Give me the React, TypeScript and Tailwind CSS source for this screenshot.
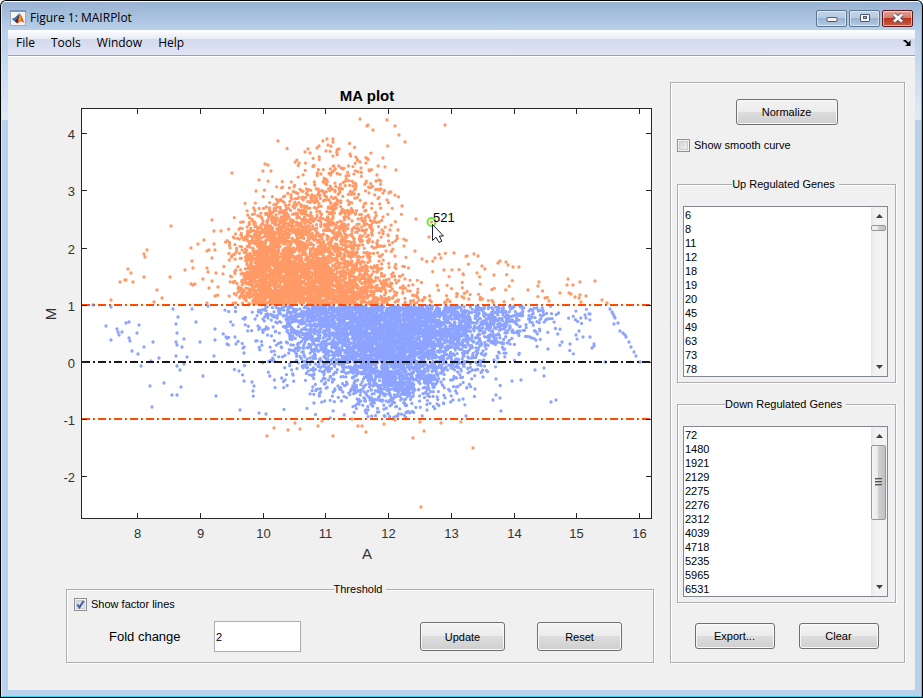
import { useState, type ReactNode } from "react";
import clsx from "clsx";

const upGenes = ["6", "8", "11", "12", "18", "19", "20", "45", "49", "63", "73", "78"];
const downGenes = ["72", "1480", "1921", "2129", "2275", "2276", "2312", "4039", "4718", "5235", "5965", "6531"];

type Point = [number, number];

// Point density on a 20px grid, first column at x = 180. Digits index into COUNTS.
const COUNTS = [0, 0.4, 1.8, 5, 12, 26, 48, 85, 135, 200];
const STEP = 20;
const GRID_X = 180;

const upperGrid = {
  top: 140,
  rows: [
    "000000001000000000000000",
    "000000344420000000000000",
    "000002455530000000000000",
    "000025665541000000000000",
    "000267766642000000000000",
    "001588776652000000000000",
    "001599887642223110000000",
    "002599998764332221000000",
    "112599999875544443221000",
  ],
};

const lowerGrid = {
  top: 300,
  rows: [
    "002456889999988765543200",
    "001346788999988776533200",
    "001245678999987664322000",
    "000134567899876531000000",
    "000013355678764310000000",
    "000012234566542000000000",
    "000000001244210000000000",
  ],
};

const upperOutliers: Point[] = [
  [278, 141], [232, 173], [259, 180], [256, 191], [263, 171], [265, 164], [268, 165], [271, 171],
  [171, 226], [212, 220], [147, 250], [144, 254], [145, 257], [128, 269], [131, 273], [120, 282],
  [125, 280], [126, 280], [133, 282], [144, 277], [157, 290], [162, 298], [154, 302], [111, 300],
  [170, 277], [185, 270], [192, 261], [193, 268], [191, 248], [198, 244], [204, 240], [191, 284],
  [195, 284], [193, 285], [203, 279], [214, 231], [221, 231], [214, 244], [207, 251], [209, 250],
  [215, 250], [212, 258], [207, 268], [208, 272], [216, 273], [212, 281], [209, 288], [218, 287],
  [215, 296], [207, 303], [323, 141], [327, 139], [333, 139], [333, 142], [328, 145], [317, 148],
  [308, 149], [319, 146], [305, 152], [339, 149], [337, 150], [350, 154], [326, 151], [310, 153],
  [360, 119], [367, 126], [368, 125], [373, 130], [387, 120], [395, 126], [399, 135], [405, 142],
  [445, 125], [383, 158], [385, 167], [396, 170], [360, 162], [366, 163], [369, 170], [377, 175],
  [376, 181], [381, 189], [383, 193], [389, 193], [402, 206], [416, 219], [429, 237], [383, 217],
  [379, 222], [382, 230], [390, 230], [398, 230], [388, 235], [397, 236], [404, 246], [415, 251],
  [386, 251], [395, 256], [422, 259], [435, 258], [441, 258], [454, 253], [467, 256], [474, 254],
  [478, 256], [482, 266], [498, 263], [500, 261], [506, 262], [508, 265], [513, 267], [519, 267],
  [494, 275], [477, 273], [463, 274], [444, 270], [568, 279], [580, 282], [595, 281], [573, 285],
  [567, 285], [539, 282], [538, 286], [560, 293], [569, 293], [571, 294], [580, 295], [586, 296],
  [602, 300], [607, 303], [579, 298], [581, 302], [575, 297], [528, 290], [545, 298], [549, 301],
  [267, 436], [274, 428], [288, 430], [295, 423], [300, 429], [318, 426], [322, 421], [333, 436],
  [352, 419], [358, 426], [362, 426], [366, 432], [384, 424], [395, 420], [413, 438], [420, 422],
  [424, 431], [441, 423], [461, 422], [473, 448], [421, 507],
];

const lowerOutliers: Point[] = [
  [93, 305], [111, 307], [106, 326], [111, 340], [117, 329], [118, 332], [119, 335], [122, 332],
  [126, 323], [129, 322], [129, 338], [130, 341], [139, 325], [137, 333], [132, 351], [138, 354],
  [144, 347], [153, 342], [159, 358], [141, 366], [151, 361], [173, 309], [178, 317], [192, 309],
  [176, 324], [177, 333], [176, 342], [177, 345], [184, 339], [182, 347], [176, 356], [187, 357],
  [196, 322], [200, 342], [177, 366], [184, 364], [180, 370], [164, 383], [150, 386], [181, 387],
  [172, 395], [177, 395], [152, 407], [203, 376], [216, 396], [214, 356], [215, 340], [215, 329],
  [226, 337], [235, 337], [227, 344], [236, 344], [233, 325], [243, 348], [244, 353], [239, 371],
  [244, 381], [252, 382], [254, 386], [253, 391], [240, 410], [259, 413], [266, 414], [208, 306],
  [610, 309], [612, 312], [613, 314], [614, 316], [615, 318], [614, 324], [618, 323], [620, 331],
  [623, 333], [625, 335], [626, 337], [629, 342], [631, 347], [634, 352], [636, 356], [640, 362],
  [605, 362], [585, 315], [590, 314], [586, 318], [590, 337], [594, 344], [594, 346], [592, 348],
  [583, 337], [579, 331], [570, 344], [576, 335], [562, 342], [548, 349], [535, 370], [544, 368],
  [544, 376], [521, 380], [512, 381], [551, 402], [556, 400], [501, 411], [500, 398], [496, 395],
  [493, 400], [475, 389], [483, 377], [496, 379], [463, 399], [459, 400], [453, 400], [466, 416],
  [427, 410],
];

function makeRandom(seed: number) {
  let s = seed;
  return () => {
    s = (s + 0x6d2b79f5) | 0;
    let t = Math.imul(s ^ (s >>> 15), 1 | s);
    t = (t + Math.imul(t ^ (t >>> 7), 61 | t)) ^ t;
    return ((t ^ (t >>> 14)) >>> 0) / 4294967296;
  };
}

function scatter(grid: { top: number; rows: string[] }, minY: number, maxY: number, seed: number) {
  const random = makeRandom(seed);
  const points: Point[] = [];
  const at = (r: number, c: number) => COUNTS[Number(grid.rows[r]?.[c] ?? 0)];
  // one extra row above the table lets the cloud fade out
  for (let r = -1; r < grid.rows.length; r++) {
    for (let c = 0; c < 24; c++) {
      const peak = Math.max(at(r, c), at(r, c + 1), at(r + 1, c), at(r + 1, c + 1));
      const tries = Math.floor(peak + random());
      for (let i = 0; i < tries; i++) {
        const u = random();
        const v = random();
        const bottom = r + 1 >= grid.rows.length ? r : r + 1;
        const density =
          (at(r, c) * (1 - u) + at(r, c + 1) * u) * (1 - v) +
          (at(bottom, c) * (1 - u) + at(bottom, c + 1) * u) * v;
        const y = grid.top + (r + v) * STEP;
        if (random() * peak < density && y > minY && y < maxY) {
          points.push([GRID_X + (c + u) * STEP, y]);
        }
      }
    }
  }
  return points;
}

const toPath = (points: Point[]) => points.map(([x, y]) => `M${x.toFixed(1)} ${y.toFixed(1)}h0`).join("");

const upperPath = toPath([...scatter(upperGrid, 136, 304, 7), ...upperOutliers]);
const lowerPath = toPath([...scatter(lowerGrid, 306, 418, 21), ...lowerOutliers]);

const xTicks = [8, 9, 10, 11, 12, 13, 14, 15, 16].map((value) => ({ value, x: Math.round(137 + (value - 8) * 62.75) + 0.5 }));
const yTicks = [4, 3, 2, 1, 0, -1, -2].map((value) => ({ value, y: Math.round(362 - value * 57.2) + 0.5 }));

function MaPlot({ showLines }: { showLines: boolean }) {
  return (
    <svg viewBox="40 82 614 488" className="block h-auto w-full" role="img" aria-label="MA plot">
      <rect x="81.5" y="108.5" width="570" height="410" fill="#fff" />
      <g fill="none" strokeWidth="3.3" strokeLinecap="round">
        <path d={lowerPath} stroke="#8ca3ff" />
        <path d={upperPath} stroke="#ff9966" />
      </g>
      {showLines && (
        <g strokeWidth="2" strokeDasharray="8 3 2 3">
          <path d="M82 305H651" stroke="#ff4b00" />
          <path d="M82 362H651" stroke="#1a1a1a" />
          <path d="M82 419H651" stroke="#ff4b00" />
        </g>
      )}
      <rect x="81.5" y="108.5" width="570" height="410" fill="none" stroke="#262626" />
      <g stroke="#262626">
        {xTicks.map(({ value, x }) => (
          <path key={value} d={`M${x} 109v5M${x} 518v-5`} />
        ))}
        {yTicks.map(({ value, y }) => (
          <path key={value} d={`M82 ${y}h5M651 ${y}h-5`} />
        ))}
      </g>
      <g fill="#333" fontSize="13">
        {xTicks.map(({ value, x }) => (
          <text key={value} x={x} y="538" textAnchor="middle">{value}</text>
        ))}
        {yTicks.map(({ value, y }) => (
          <text key={value} x="75" y={y + 5} textAnchor="end">{value}</text>
        ))}
      </g>
      <text x="367" y="101" textAnchor="middle" fontSize="15" fontWeight="bold" fill="#000">MA plot</text>
      <text x="367" y="559" textAnchor="middle" fontSize="15" fill="#333">A</text>
      <text x="56" y="314" textAnchor="middle" fontSize="15" fill="#333" transform="rotate(-90 56 314)">M</text>
      <circle cx="431.5" cy="222" r="4" fill="#fff" stroke="#66f033" strokeWidth="2" />
      <circle cx="431.5" cy="222" r="1.6" fill="#ff9966" />
      <text x="433" y="222" fontSize="13" fill="#000">521</text>
      <path d="M432.5 224.5V240.5L436 237.2L439 242.5L441.8 241.2L439.4 236H443.5Z" fill="#fff" stroke="#1a1a2e" />
    </svg>
  );
}

function PushButton({ className, children }: { className: string; children: ReactNode }) {
  return (
    <button
      type="button"
      className={clsx(
        "rounded-[3px] border border-[#707070] bg-[linear-gradient(#f4f4f4,#ebebeb_50%,#dddddd_50%,#cfcfcf)] text-[11px] leading-[14px] shadow-[inset_0_0_0_1px_#f8f8f8]",
        className
      )}
    >
      {children}
    </button>
  );
}

function CheckBox({ id, label, checked, onChange }: { id: string; label: string; checked: boolean; onChange: (value: boolean) => void }) {
  return (
    <div className="flex h-4 items-center gap-1 text-[11px] leading-[14px]">
      <span className="relative size-[13px]">
        <input
          id={id}
          type="checkbox"
          checked={checked}
          onChange={(event) => onChange(event.target.checked)}
          className="block size-[13px] appearance-none border border-[#8e8f8f] bg-[linear-gradient(135deg,#cbcfd5,#f6f6f6)] shadow-[inset_0_0_0_1px_#f4f4f4,inset_0_0_0_2px_#c8cdd4]"
        />
        {checked && (
          <svg viewBox="0 0 13 13" className="pointer-events-none absolute inset-0">
            <path d="M3.5 6.5L5.5 9.5L9.5 3" fill="none" stroke="#3f5aa0" strokeWidth="2" />
          </svg>
        )}
      </span>
      <label htmlFor={id}>{label}</label>
    </div>
  );
}

function Group({ title, className, children }: { title: string; className: string; children: ReactNode }) {
  return (
    <fieldset className={clsx("min-w-0 border border-[#adadad] shadow-[1px_1px_#fff,inset_1px_1px_#fff]", className)}>
      <legend className="mx-auto bg-[#f0f0f0] pr-1 text-[11px] leading-[14px]">{title}</legend>
      {children}
    </fieldset>
  );
}

function GeneList({ title, genes, tall }: { title: string; genes: string[]; tall?: boolean }) {
  return (
    <div className="flex h-[171px] border border-[#828790] bg-white">
      <select
        size={12}
        aria-label={title}
        className="min-w-0 flex-1 appearance-none overflow-hidden bg-white bg-none px-0 pt-0.5 pb-0 text-[11px] leading-[14px] outline-none"
      >
        {genes.map((gene) => (
          <option key={gene} className="h-[14px] min-h-0 px-px py-0 text-[11px] leading-[14px]">{gene}</option>
        ))}
      </select>
      <div className="flex w-4 flex-col items-stretch bg-[linear-gradient(90deg,#e6e6e6,#f2f2f2_4px)]">
        <button type="button" aria-label={`Scroll ${title} up`} className="flex h-[18px] items-center justify-center">
          <svg viewBox="0 0 7 4" className="h-1 w-[7px]"><path d="M0 4L3.5 0L7 4Z" fill="#404040" /></svg>
        </button>
        <div
          className={clsx(
            "mr-px flex flex-col items-center justify-center gap-px rounded-[2px] border border-[#979797] bg-[linear-gradient(90deg,#f5f5f5,#e9e9eb_50%,#d0d0d4_50%,#c0c0c4)]",
            tall ? "h-[75px]" : "h-1.5"
          )}
        >
          {tall && (
            <svg viewBox="0 0 7 9" className="h-[9px] w-[7px]">
              <path d="M0 .5h7M0 3.5h7M0 6.5h7" stroke="#555" />
              <path d="M0 1.5h7M0 4.5h7M0 7.5h7" stroke="#aaa" />
            </svg>
          )}
        </div>
        <button type="button" aria-label={`Scroll ${title} down`} className="mt-auto flex h-[18px] items-center justify-center">
          <svg viewBox="0 0 7 4" className="h-1 w-[7px]"><path d="M0 0H7L3.5 4Z" fill="#404040" /></svg>
        </button>
      </div>
    </div>
  );
}

const captionButton = "flex h-[17px] w-[31px] items-center justify-center rounded-[2px] border shadow-[inset_0_0_0_1px_#ffffff80]";

function TitleBar() {
  return (
    <header className="flex h-7 items-center pr-0.5 pl-0.5">
      <svg viewBox="0 0 16 16" className="mt-1 size-4">
        <rect x=".5" y=".5" width="15" height="15" fill="#f4f4f4" stroke="#a3a9b3" />
        <path d="M0 0h16v2H0z" fill="#7595c0" />
        <path d="M1.5 9L5 7.5L8 4.5L9.2 3.5L7.2 10L4.8 11.5Z" fill="#2f78b8" />
        <path d="M4.8 11.5L7 9L9.2 3.5L9.4 10L7.3 13.5Z" fill="#5b1d22" />
        <path d="M7.3 13.5L9.6 3L11.5 6L14.5 13L11 11Z" fill="#e2571b" />
        <path d="M8.6 11.5L9.8 4.5L10.8 8L10.5 10.5Z" fill="#f6ae3c" />
      </svg>
      <h1 className="mt-1 ml-1 text-[12px] leading-4">Figure 1: MAIRPlot</h1>
      <div className="mt-1 ml-auto flex gap-0.5">
        <button type="button" aria-label="Minimize" className={clsx(captionButton, "border-[#5c7490] bg-[linear-gradient(#c1d3e8,#b5c9e0_50%,#9ab3cf_50%,#b3cbe4)]")}>
          <svg viewBox="0 0 12 8" className="h-2 w-3"><rect x="1" y="3.5" width="10" height="4" rx=".5" fill="#f6f6f6" stroke="#535666" /></svg>
        </button>
        <button type="button" aria-label="Maximize" className={clsx(captionButton, "border-[#5c7490] bg-[linear-gradient(#c1d3e8,#b5c9e0_50%,#9ab3cf_50%,#b3cbe4)]")}>
          <svg viewBox="0 0 12 10" className="h-2.5 w-3">
            <rect x="1.5" y="1.5" width="9" height="7" rx=".5" fill="#f6f6f6" stroke="#535666" />
            <rect x="4.5" y="3.5" width="3" height="2" fill="#9ab3cf" stroke="#535666" />
          </svg>
        </button>
        <button type="button" aria-label="Close" className={clsx(captionButton, "border-[#5b1a20] bg-[linear-gradient(#e3a196,#d27d6e_45%,#b8341c_50%,#c7604a)]")}>
          <svg viewBox="0 0 12 10" className="h-2.5 w-3">
            <path d="M2 1.5L10 8.5M10 1.5L2 8.5" stroke="#535666" strokeWidth="4.4" />
            <path d="M2 1.5L10 8.5M10 1.5L2 8.5" stroke="#f8f8f8" strokeWidth="2.6" />
          </svg>
        </button>
      </div>
    </header>
  );
}

function MenuBar() {
  return (
    <nav className="flex h-[26px] items-center gap-4 border-b border-[#a0a0a0] bg-[linear-gradient(#ffffff,#e7ebf5_9px,#d3daed_9px,#e0e4f5)] px-2 text-[12px] leading-4">
      {["File", "Tools", "Window", "Help"].map((item) => (
        <button key={item} type="button">{item}</button>
      ))}
      <button type="button" aria-label="Dock figure" className="-mr-1 ml-auto">
        <svg viewBox="0 0 8 6" className="h-1.5 w-2">
          <path d="M.5 .5L2 .5L5.5 4" fill="none" stroke="#000" strokeWidth="1.8" />
          <path d="M7.5 0V6H2L4 4.5L6 2Z" fill="#000" />
        </svg>
      </button>
    </nav>
  );
}

export default function App() {
  const [smooth, setSmooth] = useState(false);
  const [factorLines, setFactorLines] = useState(true);
  const [fold, setFold] = useState("2");

  return (
    <div className="rounded-t-[6px] bg-black p-px font-['Liberation_Sans',Arial,sans-serif] text-black">
      <div className="rounded-t-[5px] border border-t-white border-r-[#35d3ee] border-b-[#35d3ee] border-l-[#dbe8f5] bg-[linear-gradient(#98b2d1,#b8d0ea_28px,#dfeaf7_118px,#b9d1ea_118px)] px-1.5 pb-1.5">
        <div className="font-['Open_Sans','Segoe_UI',sans-serif]">
          <TitleBar />
          <MenuBar />
        </div>
        <main className="flex items-start gap-4 border-t border-white bg-[#f0f0f0] pt-[25px] pr-2.5 pb-[27px] pl-8">
          <div className="min-w-0 flex-1">
            <MaPlot showLines={factorLines} />
            <Group title="Threshold" className="mt-3 ml-[26px] pb-2.5">
              <div className="pl-[7px]">
                <CheckBox id="factor-lines" label="Show factor lines" checked={factorLines} onChange={setFactorLines} />
              </div>
              <div className="mt-[9px] flex items-center pr-[31px] pl-[42px]">
                <label htmlFor="fold-change" className="w-[105px] text-[13px] leading-4">Fold change</label>
                <input
                  id="fold-change"
                  value={fold}
                  onChange={(event) => setFold(event.target.value)}
                  className="h-[31px] w-[87px] border border-[#abadb3] bg-white px-px text-[11px] leading-[14px] outline-none"
                />
                <PushButton className="ml-auto h-[29px] w-[85px]">Update</PushButton>
                <PushButton className="ml-8 h-[29px] w-[85px]">Reset</PushButton>
              </div>
            </Group>
          </div>

          <aside className="w-[235px] shrink-0 border border-[#adadad] pt-4 pr-2 pb-[13px] pl-1.5 shadow-[1px_1px_#fff,inset_1px_1px_#fff]">
            <div className="flex justify-center">
              <PushButton className="h-[26px] w-[102px]">Normalize</PushButton>
            </div>
            <div className="mt-3 mb-6">
              <CheckBox id="smooth-curve" label="Show smooth curve" checked={smooth} onChange={setSmooth} />
            </div>
            <Group title="Up Regulated Genes" className="pt-[15px] pr-[7px] pb-[5px] pl-[5px]">
              <GeneList title="Up Regulated Genes" genes={upGenes} />
            </Group>
            <Group title="Down Regulated Genes" className="mt-3.5 pt-[15px] pr-[7px] pb-[5px] pl-[5px]">
              <GeneList title="Down Regulated Genes" genes={downGenes} tall />
            </Group>
            <div className="mt-5 flex justify-center gap-6">
              <PushButton className="h-[26px] w-20">Export...</PushButton>
              <PushButton className="h-[26px] w-20">Clear</PushButton>
            </div>
          </aside>
        </main>
      </div>
    </div>
  );
}
